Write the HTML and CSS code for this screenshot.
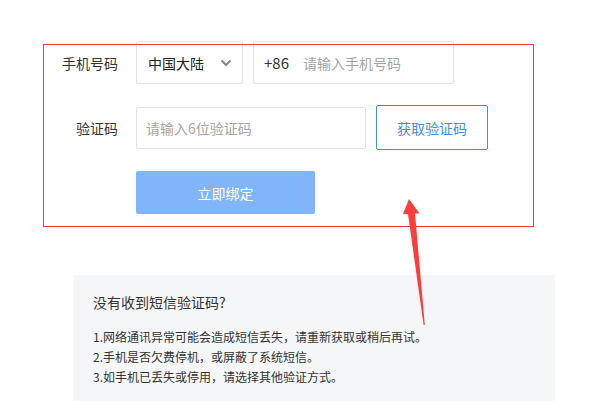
FILE: index.html
```
<!DOCTYPE html>
<html lang="zh-CN">

<head>
  <meta charset="UTF-8">
  <meta name="viewport" content="width=device-width, initial-scale=1.0">
  <title>绑定手机</title>
  <link rel="stylesheet" href="styles.css">
</head>

<body>
  <div class="container">
    <div class="form">
      <div class="row">
        <label class="label">手机号码</label>
        <div class="select">
          <span>中国大陆</span>
          <svg class="chevron" width="12" height="8" viewBox="0 0 12 8">
            <path d="M1.5 1.5 L6 6 L10.5 1.5" fill="none" stroke="#8a8a8a" stroke-width="2.2" />
          </svg>
        </div>
        <div class="input phone">
          <span class="prefix">+86</span>
          <span class="placeholder">请输入手机号码</span>
        </div>
      </div>
      <div class="row">
        <label class="label">验证码</label>
        <div class="input code">
          <span class="placeholder">请输入6位验证码</span>
        </div>
        <div class="btnCode">获取验证码</div>
      </div>
      <div class="row">
        <span class="label"></span>
        <div class="btnSubmit">立即绑定</div>
      </div>
    </div>

    <div class="tips">
      <h3 class="tipsTitle">没有收到短信验证码?</h3>
      <p>1.网络通讯异常可能会造成短信丢失，请重新获取或稍后再试。</p>
      <p>2.手机是否欠费停机，或屏蔽了系统短信。</p>
      <p>3.如手机已丢失或停用，请选择其他验证方式。</p>
    </div>

    <!-- 标注 -->
    <div class="mark"></div>
    <svg class="arrow" width="600" height="401" viewBox="0 0 600 401">
      <polygon points="409,199 419.5,213.5 415,213.5 424.8,325 423.6,325 408,214 403,214" fill="#ff3b3b" />
    </svg>
  </div>
</body>

</html>
```

FILE: styles.css
```
body {
  margin: 0;
  font-family: "Noto Sans CJK SC", "Liberation Sans", sans-serif;
  color: #333;
  background: #fff;
}
.container {
  position: relative;
  width: 600px;
  height: 401px;
  overflow: hidden;
}
.form {
  padding-top: 41px;
  display: flex;
  flex-direction: column;
  gap: 21px;
}
.row {
  display: flex;
  align-items: center;
}
.label {
  width: 118px;
  margin-right: 18px;
  text-align: right;
  font-size: 14px;
  color: #333;
}
.select,
.input {
  box-sizing: border-box;
  height: 43px;
  border: 1px solid #e3e3e3;
  border-radius: 2px;
  display: flex;
  align-items: center;
  font-size: 14px;
}
.select {
  width: 107px;
  padding: 0 10px 0 11px;
  justify-content: space-between;
  color: #222;
}
.chevron {
  display: block;
}
.input {
  margin-left: 10px;
}
.phone {
  width: 201px;
  padding-left: 10px;
}
.prefix {
  width: 39px;
  color: #333;
  font-size: 15px;
}
.placeholder {
  color: #a5a5a5;
}
.code {
  margin-left: 0;
  width: 230px;
  height: 42px;
  padding-left: 9px;
}
.btnCode {
  box-sizing: border-box;
  margin-left: 10px;
  width: 112px;
  height: 45px;
  border: 1px solid #3d8fe8;
  border-radius: 2px;
  color: #3d8fe8;
  font-size: 14px;
  display: flex;
  align-items: center;
  justify-content: center;
}
.btnSubmit {
  width: 179px;
  height: 43px;
  border-radius: 2px;
  background: #80b6f9;
  color: #fff;
  font-size: 14px;
  display: flex;
  align-items: center;
  justify-content: center;
}
.tips {
  margin: 61px 0 0 73px;
  width: 482px;
  height: 140px;
  box-sizing: border-box;
  padding: 17px 20px;
  background: #f5f6f8;
}
.tipsTitle {
  margin: 0 0 15px;
  font-size: 14px;
  font-weight: normal;
  line-height: 20px;
  color: #333;
}
.tips p {
  margin: 0;
  font-size: 12px;
  line-height: 20px;
  color: #333;
}
.mark {
  position: absolute;
  left: 43px;
  top: 44px;
  width: 489px;
  height: 181px;
  border: 1px solid #f3383c;
}
.arrow {
  position: absolute;
  left: 0;
  top: 0;
}
```
